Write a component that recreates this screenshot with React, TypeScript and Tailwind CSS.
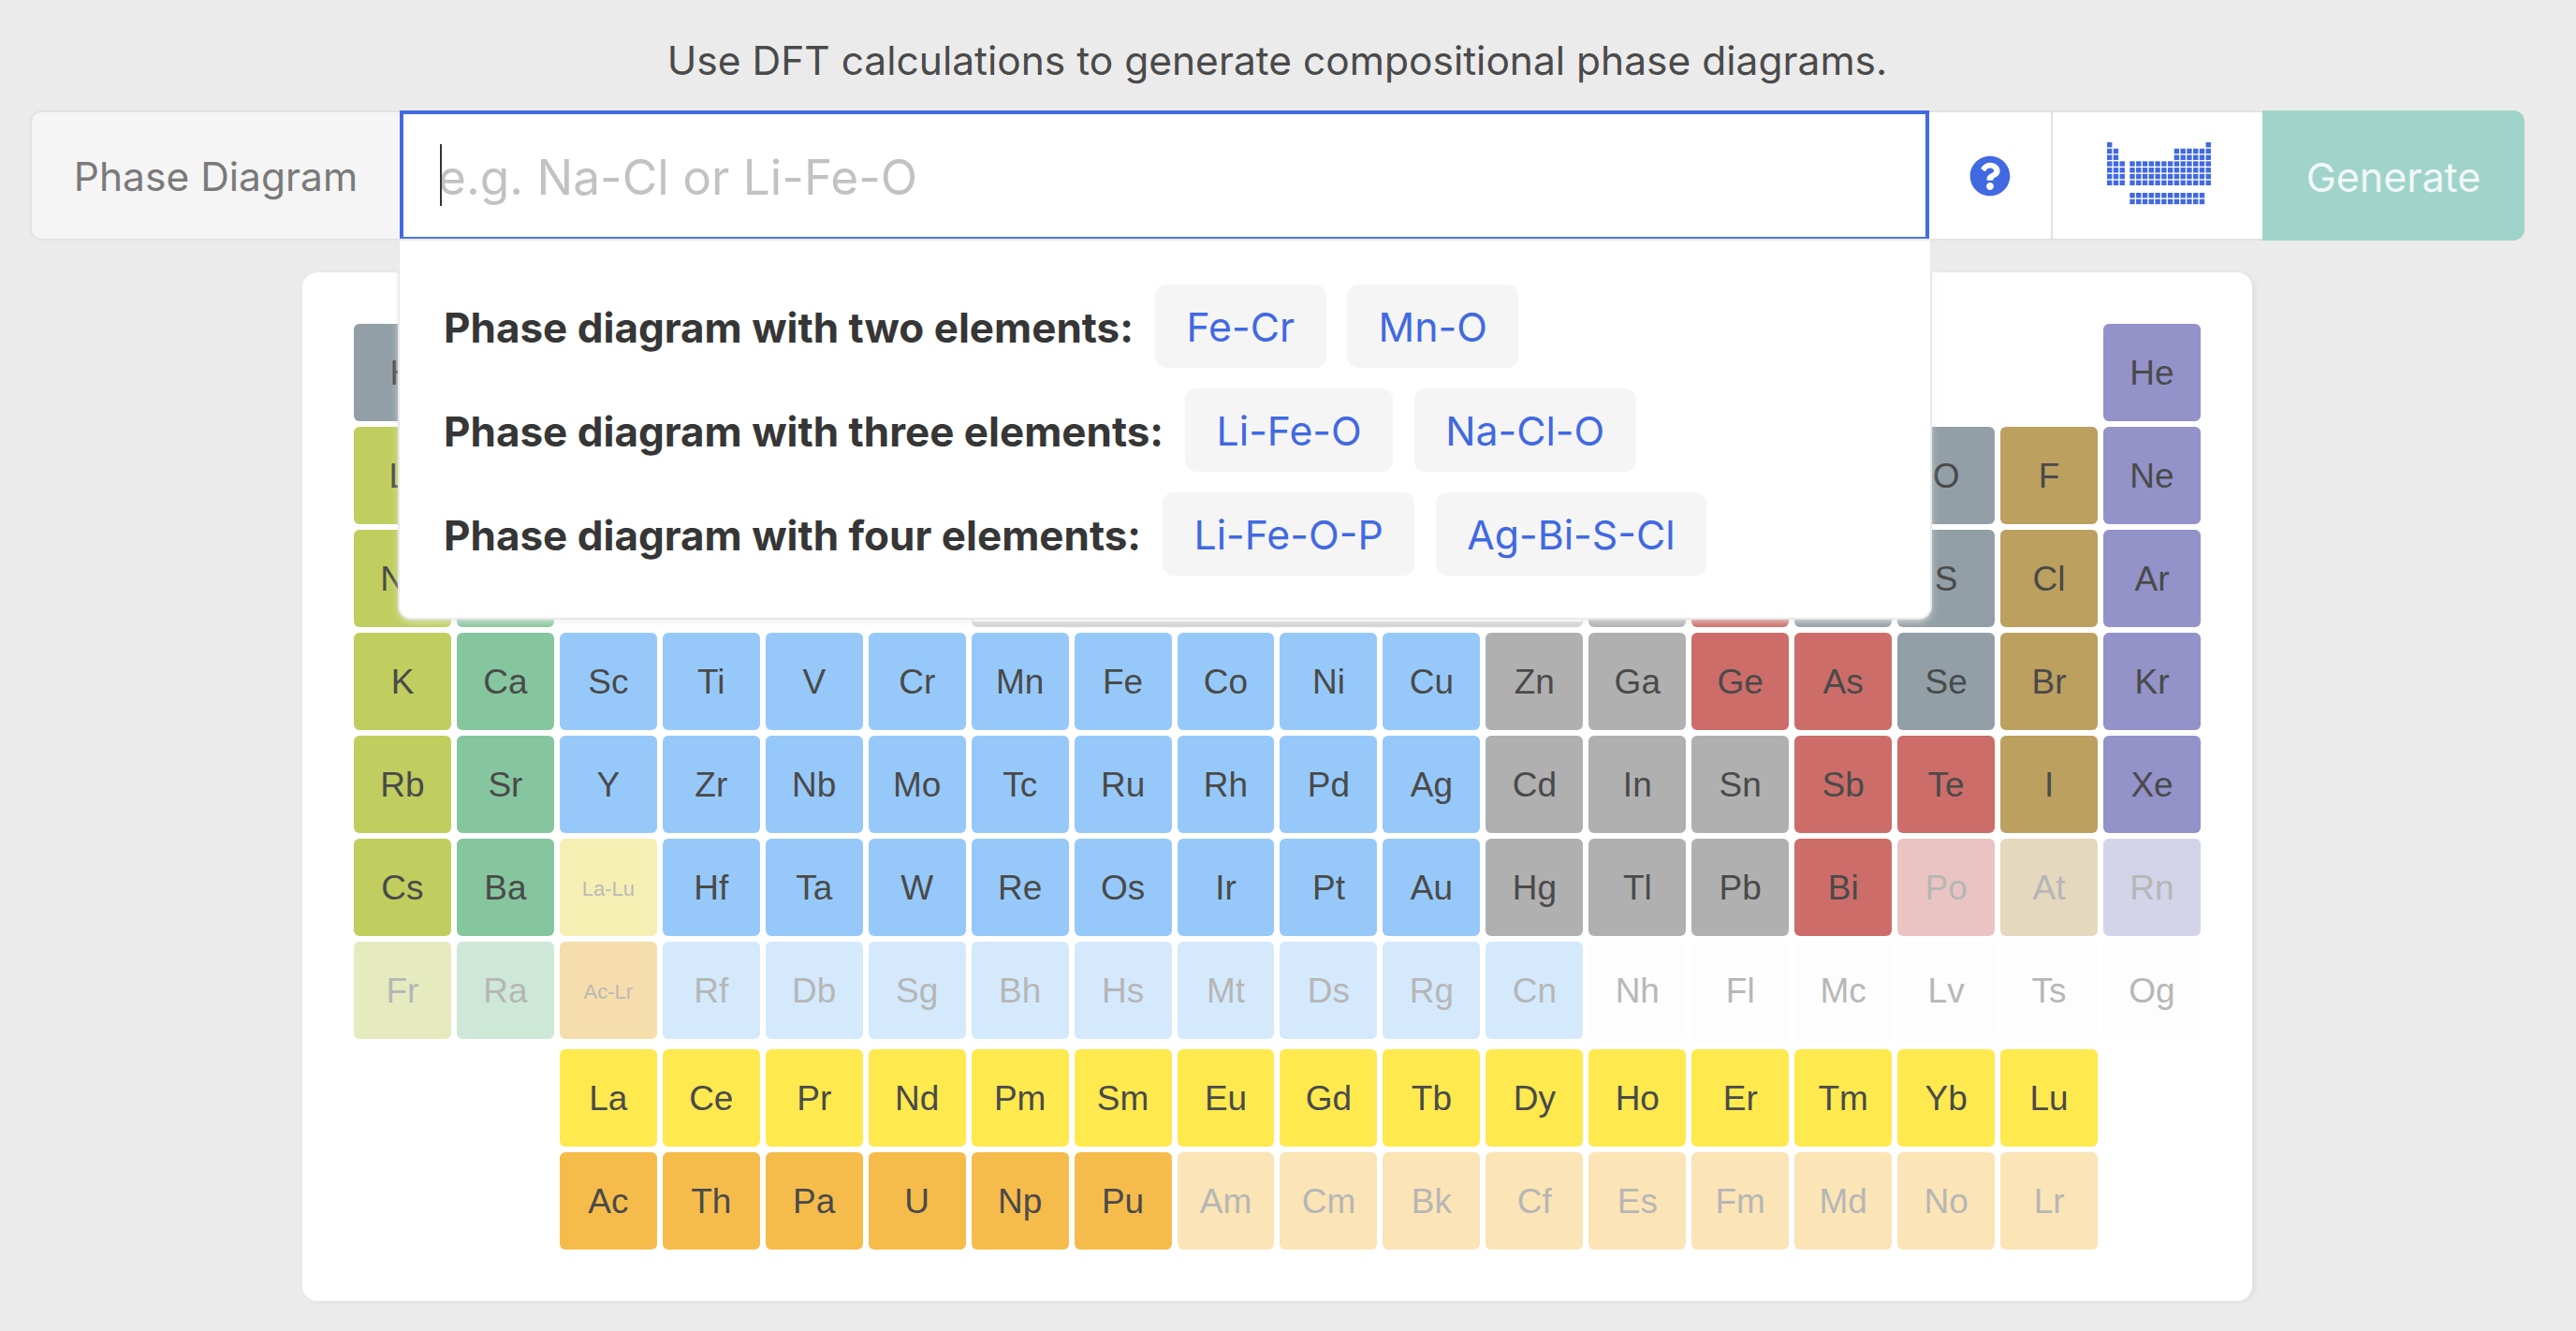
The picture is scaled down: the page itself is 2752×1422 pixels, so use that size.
import type { FC } from 'react';
import { FaQuestionCircle } from 'react-icons/fa';

type Category =
  | 'alkali'
  | 'earth'
  | 'transition'
  | 'post'
  | 'metalloid'
  | 'nonmetal'
  | 'halogen'
  | 'noble'
  | 'lanthanide'
  | 'actinide'
  | 'lanthanideRange'
  | 'actinideRange'
  | 'unknown';

type Cell = { symbol: string, category: Category, faded?: boolean } | null;

const categoryClass: Record<Category, string> = {
  alkali: 'bg-[#bfce5f] text-[#4a4a4a]',
  earth: 'bg-[#86c69f] text-[#4a4a4a]',
  transition: 'bg-[#96c9f9] text-[#4a4a4a]',
  post: 'bg-[#b0b0b0] text-[#4a4a4a]',
  metalloid: 'bg-[#cd6d69] text-[#4a4a4a]',
  nonmetal: 'bg-[#929fa6] text-[#4a4a4a]',
  halogen: 'bg-[#bca060] text-[#4a4a4a]',
  noble: 'bg-[#9392c9] text-[#4a4a4a]',
  lanthanide: 'bg-[#fee94f] text-[#4a4a4a]',
  actinide: 'bg-[#f6bc4b] text-[#4a4a4a]',
  lanthanideRange: 'bg-[#f6efb3] text-[#b9b9b9]',
  actinideRange: 'bg-[#f6ddac] text-[#b9b9b9]',
  unknown: 'bg-[#fdfdfd] text-[#b7b7b7]',
};

const toCells = (symbols: string, category: Category, faded = false): Cell[] =>
  symbols.split(' ').map((symbol) => ({ symbol, category, faded }));

const blanks = (count: number): Cell[] => Array.from({ length: count }, () => null);

const mainTable: Cell[] = [
  ...toCells('H', 'nonmetal'),
  ...blanks(10),
  ...toCells('He', 'noble'),

  ...toCells('Li', 'alkali'),
  ...toCells('Be', 'earth'),
  ...blanks(4),
  ...toCells('B', 'metalloid'),
  ...toCells('C N O', 'nonmetal'),
  ...toCells('F', 'halogen'),
  ...toCells('Ne', 'noble'),

  ...toCells('Na', 'alkali'),
  ...toCells('Mg', 'earth'),
  ...blanks(4),
  ...toCells('Al', 'post'),
  ...toCells('Si', 'metalloid'),
  ...toCells('P S', 'nonmetal'),
  ...toCells('Cl', 'halogen'),
  ...toCells('Ar', 'noble'),

  ...toCells('K', 'alkali'),
  ...toCells('Ca', 'earth'),
  ...toCells('Sc Ti V Cr Mn Fe Co Ni Cu', 'transition'),
  ...toCells('Zn Ga', 'post'),
  ...toCells('Ge As', 'metalloid'),
  ...toCells('Se', 'nonmetal'),
  ...toCells('Br', 'halogen'),
  ...toCells('Kr', 'noble'),

  ...toCells('Rb', 'alkali'),
  ...toCells('Sr', 'earth'),
  ...toCells('Y Zr Nb Mo Tc Ru Rh Pd Ag', 'transition'),
  ...toCells('Cd In Sn', 'post'),
  ...toCells('Sb Te', 'metalloid'),
  ...toCells('I', 'halogen'),
  ...toCells('Xe', 'noble'),

  ...toCells('Cs', 'alkali'),
  ...toCells('Ba', 'earth'),
  ...toCells('La-Lu', 'lanthanideRange'),
  ...toCells('Hf Ta W Re Os Ir Pt Au', 'transition'),
  ...toCells('Hg Tl Pb', 'post'),
  ...toCells('Bi', 'metalloid'),
  ...toCells('Po', 'metalloid', true),
  ...toCells('At', 'halogen', true),
  ...toCells('Rn', 'noble', true),

  ...toCells('Fr', 'alkali', true),
  ...toCells('Ra', 'earth', true),
  ...toCells('Ac-Lr', 'actinideRange'),
  ...toCells('Rf Db Sg Bh Hs Mt Ds Rg Cn', 'transition', true),
  ...toCells('Nh Fl Mc Lv Ts Og', 'unknown'),
];

const innerBlocks: Cell[] = [
  ...blanks(2),
  ...toCells('La Ce Pr Nd Pm Sm Eu Gd Tb Dy Ho Er Tm Yb Lu', 'lanthanide'),
  ...blanks(3),
  ...toCells('Ac Th Pa U Np Pu', 'actinide'),
  ...toCells('Am Cm Bk Cf Es Fm Md No Lr', 'actinide', true),
  ...blanks(1),
];

const examples = [
  { label: 'Phase diagram with two elements:', items: ['Fe-Cr', 'Mn-O'] },
  { label: 'Phase diagram with three elements:', items: ['Li-Fe-O', 'Na-Cl-O'] },
  { label: 'Phase diagram with four elements:', items: ['Li-Fe-O-P', 'Ag-Bi-S-Cl'] },
];

const ElementCell: FC<{ cell: Cell }> = ({ cell }) => {
  if (!cell) return <div />;

  const isRange = cell.symbol.includes('-');

  return (
    <div
      className={`flex items-center justify-center rounded-[6px] pt-[2px] ${
        categoryClass[cell.category]
      } ${cell.faded ? 'opacity-40' : ''} ${isRange ? 'text-[22px]' : 'text-[37px]'}`}
    >
      {cell.symbol}
    </div>
  );
};

// 16 columns drawn as 3 + 13 with a small gap, the f-block sits below
const TableIcon: FC = () => {
  const pitch = 6.77;
  const groupX = (col: number) => (col < 3 ? col * pitch : 24.3 + (col - 3) * pitch);
  const squares: { x: number, y: number }[] = [];

  for (let row = 0; row < 7; row += 1) {
    for (let col = 0; col < 16; col += 1) {
      const visible =
        row === 0
          ? col === 0 || col === 15
          : row < 3
            ? col < 2 || col >= 10
            : true;
      if (visible) squares.push({ x: groupX(col), y: row * pitch });
    }
  }
  for (let row = 0; row < 2; row += 1) {
    for (let col = 3; col < 15; col += 1) {
      squares.push({ x: groupX(col), y: 54 + row * pitch });
    }
  }

  return (
    <svg className="h-[68px] w-[112px]" viewBox="0 0 112 68">
      {squares.map(({ x, y }) => (
        <rect key={`${x}-${y}`} fill="#4169e1" height="5.4" width="5.4" x={x} y={y} />
      ))}
    </svg>
  );
};

const App: FC = () => {
  return (
    <div className="h-[1422px] w-full overflow-hidden bg-[#ebebeb] font-['Inter',sans-serif]">
      <div className="ml-[32px] flex w-[2665px] flex-col items-center">
        <p className="mt-[36px] mb-[24px] text-[42.5px] leading-[58px] text-[#4a4a4a]">
          Use DFT calculations to generate compositional phase diagrams.
        </p>

        <div className="relative z-10 flex h-[139px] w-full">
          <div className="flex w-[395px] items-center justify-center rounded-l-[12px] border-2 border-r-0 border-[#e2e2e2] bg-[#f5f5f5] pt-[2px] text-[42.5px] text-[#7a7a7a]">
            Phase Diagram
          </div>
          <div className="relative w-[1634px] border-[4px] border-[#4169e1] bg-white">
            <input
              className="h-full w-full pt-[3px] pl-[37px] text-[51.4px] outline-none caret-transparent placeholder:text-[#c2c2c2]"
              placeholder="e.g. Na-Cl or Li-Fe-O"
              readOnly
              type="text"
            />
            <span className="absolute top-[32px] left-[39px] h-[66px] w-[2px] bg-[#333333]" />
          </div>
          <div className="flex w-[132px] items-center justify-center border-y-2 border-r-2 border-[#e2e2e2] bg-white">
            <FaQuestionCircle className="text-[#4169e1]" size={44} />
          </div>
          <div className="flex w-[224px] items-center justify-center border-y-2 border-[#e2e2e2] bg-white pb-[3px] pl-[3px]">
            <TableIcon />
          </div>
          <button
            className="flex w-[280px] items-center justify-center rounded-r-[12px] bg-[#a0d3ca] pt-[3px] text-[43px] text-[#f1f8f7]"
            type="button"
          >
            Generate
          </button>

          <div className="absolute top-[139px] left-[395px] flex w-[1635px] flex-col gap-[22px] rounded-b-[12px] bg-white pt-[47px] pb-[45px] pl-[47px] shadow-[0_0_0_2px_#e9e9e9,0_3px_10px_rgba(235,235,235,0.95)]">
            {examples.map(({ label, items }) => (
              <div key={label} className="flex h-[89px] items-center">
                <span className="mr-[23px] pt-[2px] text-[44px] font-bold text-[#363636]">{label}</span>
                <div className="flex gap-[22.5px]">
                  {items.map((item) => (
                    <span
                      key={item}
                      className="flex h-[89px] items-center rounded-[12px] bg-[#f5f5f5] px-[33.5px] pt-[4px] text-[42.8px] text-[#4169e1]"
                    >
                      {item}
                    </span>
                  ))}
                </div>
              </div>
            ))}
          </div>
        </div>

        <div className="mt-[34px] w-[2083px] rounded-[16px] bg-white px-[55px] pt-[55px] pb-[55px] font-['Liberation_Sans',sans-serif] shadow-[3px_1px_6px_rgba(0,0,0,0.05)]">
          <div className="grid auto-rows-[104px] grid-cols-[repeat(18,minmax(0,1fr))] gap-[6px]">
            <div className="col-start-7 col-end-13 row-start-1 row-end-4 rounded-[6px] border border-b-[6px] border-[#d3d3d3] bg-white" />
            {mainTable.map((cell, index) => (
              <ElementCell key={cell ? cell.symbol : `blank-${index}`} cell={cell} />
            ))}
          </div>
          <div className="mt-[11px] grid auto-rows-[104px] grid-cols-[repeat(18,minmax(0,1fr))] gap-[6px]">
            {innerBlocks.map((cell, index) => (
              <ElementCell key={cell ? cell.symbol : `blank-${index}`} cell={cell} />
            ))}
          </div>
        </div>
      </div>
    </div>
  );
};

export default App;
